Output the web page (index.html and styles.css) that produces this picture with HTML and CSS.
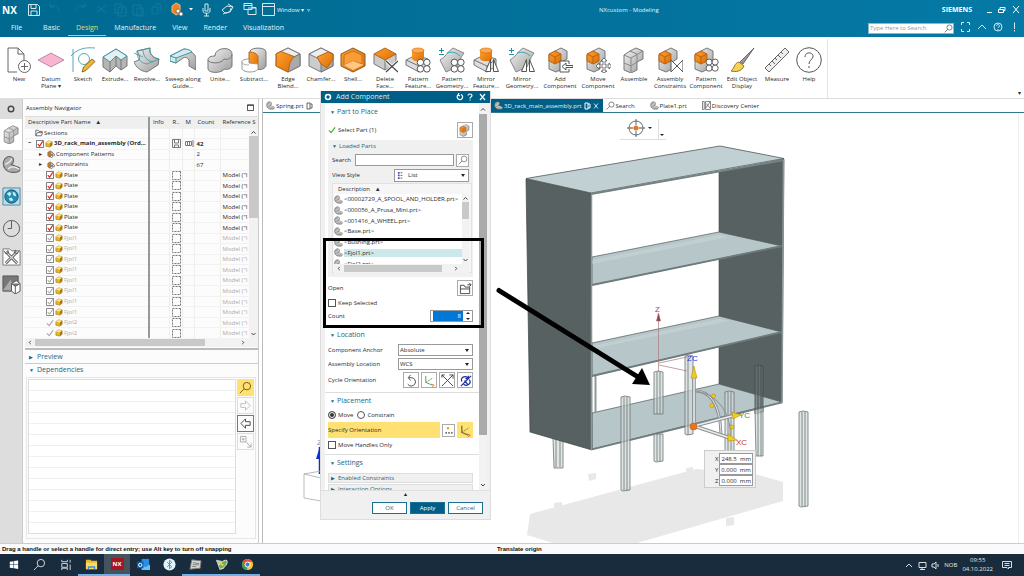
FILE: index.html
```html
<!DOCTYPE html>
<html lang="en">
<head>
<meta charset="utf-8">
<title>NXcustom - Modeling</title>
<link rel="stylesheet" href="styles.css">
</head>
<body>
<svg class="sprite" aria-hidden="true">
  <defs>
    <linearGradient id="metal" x1="0" y1="0" x2="1" y2="1"><stop offset="0" stop-color="#f4f4f4"/><stop offset="1" stop-color="#9c9c9c"/></linearGradient>
    <linearGradient id="amber" x1="0" y1="0" x2="1" y2="1"><stop offset="0" stop-color="#ffa233"/><stop offset="1" stop-color="#dd6c00"/></linearGradient>
  </defs>
  <symbol id="box" viewBox="0 0 26 26"><path d="M1 7 13 1l12 6v12l-12 6L1 19z" fill="#ccc" stroke="#777"/><path d="M1 7 13 1l12 6-12 6z" fill="#eee" stroke="#777"/><path d="M13 13 25 7v12l-12 6z" fill="#aaa" stroke="#777"/></symbol>
  <symbol id="blocks" viewBox="0 0 26 26"><path d="M9 4 15 1l7 3v8l-6 3v8l-6 3-7-3V8z" fill="url(#metal)" stroke="#777"/><path d="M3 8l7 3 12-7M10 11v15M3 16l7 3 6-4M9 4l7 3v8" fill="none" stroke="#888"/></symbol>
  <symbol id="oblocks" viewBox="0 0 26 26"><path d="M8 4 14 1l6 3v8l-5 3v7l-6 3-7-3V8z" fill="url(#metal)" stroke="#777"/><path d="M2 7l6-3 6 3v7l-6 3-6-3z" fill="url(#amber)" stroke="#b86414"/><path d="M2 7l6 3 6-3M8 10v7" fill="none" stroke="#b86414"/></symbol>
  <symbol id="check" viewBox="0 0 9 9"><path d="M.5.5h8v8h-8z" fill="#fff" stroke="#666"/><path d="M2 4.500l2 2.500 3.500-5.500" fill="none" stroke="#d22" stroke-width="1.300"/></symbol>
  <symbol id="gcheck" viewBox="0 0 9 9"><path d="M.5.5h8v8h-8z" fill="#fff" stroke="#777"/><path d="M2 4.500l2 2.500 3.500-5.500" fill="none" stroke="#888"/></symbol>
  <symbol id="tick" viewBox="0 0 9 9"><path d="M1 5l2.500 2.500L8 1.500" fill="none" stroke="currentColor" stroke-width="1.300"/></symbol>
  <symbol id="cube" viewBox="0 0 9 9"><path d="M1 3 4 1l4 1v4L5.500 8 1 7z" fill="#e9b521" stroke="#8d6b12" stroke-width=".6"/><path d="M1 3 4 1l4 1-2.500 2z" fill="#ffe88c"/><path d="M5.500 4 8 2v4L5.500 8z" fill="#a87912"/></symbol>
  <symbol id="set" viewBox="0 0 9 9"><path d="M8.500.5h-8v8h8z" fill="none" stroke="#777" stroke-dasharray="2 1"/></symbol>
  <symbol id="part" viewBox="0 0 12 12"><path d="M1 4c1-3 4-4 6-2 1 2 0 3-1 4l5 2c1 3-2 3-4 3C3 11 0 8 1 4z" fill="#aaa" stroke="#666" stroke-width=".7"/><path d="M2 6c2-1 4-2 4-4M4 9c1-2 4-2 7 0" fill="none" stroke="#eee" stroke-width=".8"/></symbol>
  <symbol id="lens" viewBox="0 0 14 14"><circle cx="8.500" cy="5.500" r="4"/><path d="M5.600 8.400 1 13"/></symbol>
  <symbol id="pattern" viewBox="0 0 12 12"><g fill="#fff" stroke="#555" stroke-width=".8"><circle cx="3.500" cy="3.500" r="2.600"/><circle cx="8.700" cy="3.500" r="2.600"/><circle cx="3.500" cy="8.700" r="2.600"/><circle cx="8.700" cy="8.700" r="2.600"/></g></symbol>
  <symbol id="mirror" viewBox="0 0 14 14"><path d="M5.500 1v12H.5zM8.500 1v12h5z" fill="#fff" stroke="#555"/></symbol>
  <symbol id="surface" viewBox="0 0 26 26"><path d="M1 13C7 10 8 5 14 1l11 5c-4 5-5 10-7 14L7 25z" fill="url(#metal)" stroke="#888"/><path d="M8 6c6-2 10 0 13 3" fill="none" stroke="#36a6b6"/><path d="M0 3.500h5M2.500 1v5M0 7.500h5" stroke="#1892a4"/></symbol>
  <symbol id="boss" viewBox="0 0 26 26"><path d="M1 13l10-5 12 4v7l-9 6-13-7z" fill="#ddd" stroke="#777"/><path d="M1 13l13 6 9-7M14 19v6" fill="none" stroke="#777"/><path d="M7 3v9c2 3 10 3 12 0V3z" fill="url(#amber)"/><ellipse cx="13" cy="3.500" rx="6" ry="2.500" fill="#ffa94a" stroke="#c46a10" stroke-width=".6"/></symbol>
  <symbol id="compIcon" viewBox="0 0 10 10"><path d="M1 3l3-2 2 2v4L3 9 1 7z" fill="#cf7a1e" stroke="#704010" stroke-width=".6"/><g fill="#fff" stroke="#444" stroke-width=".8"><circle cx="6" cy="4" r="1.500"/><circle cx="8.300" cy="6" r="1.300"/><circle cx="5.500" cy="8" r="1.400"/></g></symbol>
</svg>

<div class="app">
  <header class="top">
    <div class="titlebar">
      <strong class="nx">NX</strong>
      <svg class="quick" viewBox="0 0 284 20" fill="none" stroke="#d5e9f0">
        <path d="M1.500 4.500h9l2 2v9h-11zM4 4.500v4h5v-4M4 15v-4h6v4"/>
        <g stroke="#14789d"><path d="M23 7c4-3 8-1 9 4M23 7V3M23 7h4M58 7c-4-3-8-1-9 4M58 7V3M58 7h-4M70 12l9-7M70 6l9 7M88 4h7v9h-7zM91 7h8v9h-8zM106 5h8v10h-8zM110 8h6v8h-6zM125 7h6v7h-6zM128 4h6v8"/></g>
        <path d="M145 6l4-3 4 2v8l-4 2-4-3z" fill="#ec8421" stroke="#f7b87b"/><g fill="#fff" stroke="#555" stroke-width=".7"><circle cx="151" cy="11" r="2"/><circle cx="154" cy="14" r="2"/></g>
        <path d="M162 8h4l-2 2.500z" fill="#fff" stroke="none"/>
        <path d="M178 4h3v7h-3zM176 8v3c0 3 7 3 7 0V8M179.500 13v3M177 16h5"/>
        <path d="M195 10l5-4 6 1-3 5-5 1zM201 4l5 3M196 14c4-2 7 0 8-6"/>
        <path d="M217 3.500h8v6h-8zM217 5.500h8M221 9.500v5h8v-7h-4M221 8h8"/>
        <path d="M235.500 3.500h12v12h-12zM235.500 6.500h12"/>
      </svg>
      <span class="window-label">Window ▾ &nbsp;▿</span>
      <span class="doc-title">NXcustom - Modeling</span>
      <strong class="brand">SIEMENS</strong>
      <svg class="win-controls" viewBox="0 0 34 12" fill="none" stroke="#fff"><path d="M1 8.500h5M12.500 5.500h5v3h-5zM14 5V3.500h5v3h-1M27 2l6 7M33 2l-6 7"/></svg>
    </div>
    <div class="menubar">
      <nav class="menu">
        <a href="#" class="file">File</a><a href="#">Basic</a><a href="#" class="active">Design</a><a href="#">Manufacture</a><a href="#">View</a><a href="#">Render</a><a href="#">Visualization</a>
      </nav>
      <label class="cmd-search"><input type="text" placeholder="Type Here to Search" aria-label="Search commands"><svg viewBox="0 0 14 14" fill="none" stroke="#444"><use href="#lens"/></svg></label>
      <svg class="head-icons" viewBox="0 0 58 12" fill="none" stroke="#d5e9f0"><path d="M1.500 4V1.500H4M7 1.500h2.500V4M9.500 8v2.500H7M4 10.500H1.500V8M18 8l4-4 4 4"/><circle cx="38" cy="6" r="4"/><path d="M36.500 5c0-2 3-2 3 0 0 1-1.500 1-1.500 2M38 8v1M54.500 1.500V8M54.500 9v1.500"/></svg>
    </div>
  </header>

  <div class="ribbon">
    <button class="tool"><svg viewBox="0 0 26 26" fill="none" stroke="#666"><path d="M11 25H2V1h10l6 6v7M12 1v6h6"/><circle cx="18.500" cy="19.500" r="6"/><path d="M18.500 16v7M15 19.500h7"/></svg>New</button>
    <button class="tool"><svg viewBox="0 0 26 26"><path d="M0 13 13 6l13 7-13 7z" fill="#f9b4d2" stroke="#a06c85" stroke-width=".7"/></svg>Datum<br>Plane ▾</button>
    <button class="tool"><svg viewBox="0 0 26 26" fill="none" stroke="#2b95ab" stroke-width=".8"><path d="M1 9C7 2 15 0 25 1M3 2v23"/><circle cx="14" cy="12" r="5.500"/><path d="M12 25l1.500-5L22 12l3 2.500-9 9z" fill="#f2b530" stroke="#6f5517"/></svg>Sketch</button>
    <button class="tool"><svg viewBox="0 0 26 26"><path d="M1 10 14 2l11 7v10l-6 4-5-4-6 6-7-5z" fill="#b5b5b5" stroke="#777"/><path d="M1 10 14 2l11 7-6 4-5-4-6 6z" fill="#e4eff0" stroke="#3a98a6"/><path d="M8 15v10M14 9v10M19 13v10" stroke="#777"/></svg>Extrude...</button>
    <button class="tool"><svg viewBox="0 0 26 26"><path d="M3 4 16 1c-1 6 3 10 9 11l-1 6-11 7C6 24 2 20 0 15l5-2c1-3 0-6-2-9z" fill="url(#metal)" stroke="#777"/><path d="M3 4 16 1c-1 6 3 10 9 11l-12 5C6 16 3 11 3 4zM0 6l9 4M9 3c0 6 4 11 10 12" fill="none" stroke="#3a98a6" stroke-width=".8"/></svg>Revolve...</button>
    <button class="tool wider"><svg viewBox="0 0 26 26"><path d="M0 9 14 2c7 1 11 5 12 9v12l-7-4v-6c-2-3-4-3-6-2l-7 5-6-2z" fill="url(#metal)" stroke="#777"/><path d="M0 9v5l6 2v-5zM0 9 14 2c4 0 6 1 8 3L6 11" fill="#d4eaec" stroke="#3a98a6"/></svg>Sweep along<br>Guide...</button>
    <button class="tool mid"><svg viewBox="0 0 26 26"><path d="M1 13c0-3 3-4 7-4 0-9 17-10 17-2v12c-1 3-5 4-8 3-1 4-15 5-16 0z" fill="url(#metal)" stroke="#777"/><path d="M1 13c1 4 14 4 16-1 3 1 7 0 8-4" fill="none" stroke="#777"/></svg>Unite...</button>
    <button class="tool mid"><svg viewBox="0 0 26 26"><path d="M9 4c2-4 16-4 16 1v14c-2 4-7 4-10 3z" fill="url(#metal)" stroke="#777"/><path d="M8 5c5 0 8 2 9 4v13l-9-6z" fill="url(#amber)" stroke="#b86414"/><path d="M8 12c-4 0-7 1-7 3v7c2 4 14 4 16 0v-5l-9-1z" fill="#fff" stroke="#999"/><path d="M1 15c0 2 3 3 7 3" fill="none" stroke="#aaa"/></svg>Subtract...</button>
    <button class="tool mid"><svg viewBox="0 0 26 26"><use href="#box"/><path d="M1 7 6 4.500l13 5C17 12 14 16 14 21l-1 4-12-6c0-4 1-8 0-12z" fill="url(#amber)" stroke="#b86414"/></svg>Edge<br>Blend...</button>
    <button class="tool"><svg viewBox="0 0 26 26"><use href="#box"/><path d="M9 10 20 5l5 2v5l-6 9-6-4z" fill="url(#amber)" stroke="#b86414"/></svg>Chamfer...</button>
    <button class="tool"><svg viewBox="0 0 26 26"><path d="M1 7 13 1l12 6v12l-12 6L1 19z" fill="url(#amber)" stroke="#8a5a28"/><path d="M4 8l9 5 9-5 1 10-10 5-9-5z" fill="#f9a850"/><path d="M4 8l9-4 9 4v9l-9-3-9 4z" fill="#fb9d36" stroke="#9c5b14" stroke-width=".6"/><path d="M4 18l9-4 10 4-10 5z" fill="#ffc684"/></svg>Shell...</button>
    <button class="tool"><svg viewBox="0 0 26 26"><path d="M2 7v10l11 6 11-6V7z" fill="#ccc" stroke="#777"/><path d="M2 7 13 1l11 6-11 6z" fill="url(#amber)" stroke="#b86414"/><path d="M13 13v10" stroke="#777"/><path d="M14 14l12 11M26 14 14 25" stroke="#fff" stroke-width="3"/><path d="M14 14l12 11M26 14 14 25" stroke="#444" stroke-width="1.200"/></svg>Delete<br>Face...</button>
    <button class="tool mid"><svg viewBox="0 0 26 26"><use href="#boss"/><use href="#pattern" x="11" y="11" width="15" height="15"/></svg>Pattern<br>Feature...</button>
    <button class="tool mid"><svg viewBox="0 0 26 26"><use href="#surface"/><use href="#pattern" x="11" y="11" width="15" height="15"/></svg>Pattern<br>Geometry...</button>
    <button class="tool mid"><svg viewBox="0 0 26 26"><use href="#boss"/><use href="#mirror" x="12" y="11" width="14" height="15"/></svg>Mirror<br>Feature...</button>
    <button class="tool wide"><svg viewBox="0 0 26 26"><use href="#surface"/><use href="#mirror" x="12" y="11" width="14" height="15"/></svg>Mirror<br>Geometry...</button>
    <button class="tool wide"><svg viewBox="0 0 26 26"><use href="#oblocks"/><path d="M22 17v-3h-9v11h9v-3M26 18.500h-7V16l-4 3.500 4 3.500v-2.500h7z" fill="#fff" stroke="#555"/></svg>Add<br>Component</button>
    <button class="tool wide"><svg viewBox="0 0 26 26"><use href="#oblocks"/><path d="M19 11l3 3h-2v4h4v-2l2.500 3-2.500 3v-2h-4v4h2l-3 2-3-2h2v-4h-4v2l-3-3 3-3v2h4v-4h-2z" fill="#fff" stroke="#555" stroke-width=".8"/></svg>Move<br>Component</button>
    <button class="tool mid"><svg viewBox="0 0 26 26"><use href="#blocks"/></svg>Assemble</button>
    <button class="tool wide"><svg viewBox="0 0 26 26"><use href="#oblocks"/><path d="M14 13v12l12-12v12z" fill="#fff" stroke="#555"/></svg>Assembly<br>Constraints</button>
    <button class="tool mid"><svg viewBox="0 0 26 26"><use href="#oblocks"/><use href="#pattern" x="12" y="11" width="14" height="14"/></svg>Pattern<br>Component</button>
    <button class="tool wide"><svg viewBox="0 0 26 26"><path d="M25 1 14 17l-3-2z" fill="#999" stroke="#555" stroke-width=".8"/><path d="M10 15l5 4c-3 6-8 6-13 5 4-3 3-8 8-9z" fill="#f7d257" stroke="#8f7424"/></svg>Edit Object<br>Display</button>
    <button class="tool"><svg viewBox="0 0 26 26"><path d="M1 21 21 1l4 4L5 25z" fill="#eee" stroke="#666"/><path d="M5 17l2 2M8 14l3 3M11 11l2 2M14 8l3 3M17 5l2 2" stroke="#666"/></svg>Measure</button>
    <button class="tool"><svg viewBox="0 0 26 26" fill="none" stroke="#555"><circle cx="13" cy="13" r="12.300"/><path d="M9 10c0-6 9-5 8 0-1 3-4 3-4 7M13 19v2"/></svg>Help</button>
    <span class="ribbon-end">▾</span>
  </div>

  <div class="main">
    <aside class="rail">
      <button aria-label="Settings"><svg viewBox="0 0 20 20" fill="none" stroke="#444" stroke-width="2"><circle cx="10" cy="10" r="4"/></svg></button>
      <button class="on" aria-label="Assembly Navigator"><svg viewBox="0 0 26 26"><use href="#blocks"/></svg></button>
      <button aria-label="Part Navigator"><svg viewBox="0 0 12 12"><use href="#part"/></svg></button>
      <button class="web" aria-label="Web Browser"><svg viewBox="0 0 20 20"><path d="M1 1h18v18H1z" fill="#bcdceb" stroke="#4e8aa8"/><circle cx="10" cy="10" r="7" fill="#248bb5" stroke="#17586f"/><path d="M5 7l3-2 2 2-2 3zM11 5l3 1 1 4-3-1zM7 12l3-1 2 3-3 1z" fill="#c9eef2"/></svg></button>
      <button aria-label="History"><svg viewBox="0 0 20 20" fill="none" stroke="#555"><circle cx="10" cy="10" r="8.500"/><path d="M10 2v8H6"/></svg></button>
      <button aria-label="Process Studio"><svg viewBox="0 0 20 20"><path d="M1 2h7l2 2h9v15H1z" fill="#fff" stroke="#777"/><path d="M4 5l12 12M16 5 4 17" stroke="#555" stroke-width="3"/><path d="M4 5l12 12M16 5 4 17" stroke="#ddd" stroke-width="1.300"/><path d="M2 4l2 3 3-1-1-3M18 4l-2 3-3-1 1-3" fill="none" stroke="#555"/></svg></button>
      <button aria-label="System Scenes"><svg viewBox="0 0 20 20"><path d="M1 1h16v16H1z" fill="#777" stroke="#555"/><path d="M1 16 9 5l5 11z" fill="#aaa"/><path d="M10 9l5-3 4 3v8l-5 3-4-3zM10 9l4 3 5-3M14 12v8" fill="#fff" stroke="#555"/></svg></button>
    </aside>

    <section class="navigator">
      <div class="panel-title"><span>Assembly Navigator</span><svg viewBox="0 0 8 8" fill="none" stroke="#333"><path d="M.5 1h7v6.500h-7zM.5 1.500h7"/></svg></div>
      <div class="tree">
        <table>
          <colgroup><col class="c-name"><col class="c-info"><col class="c-r"><col class="c-m"><col class="c-count"><col></colgroup>
          <thead><tr><th>Descriptive Part Name &nbsp; ▲</th><th>Info</th><th>R..</th><th>M</th><th>Count</th><th>Reference S</th></tr></thead>
          <tbody>
            <tr><td><span class="cell l1"><svg viewBox="0 0 10 9" fill="none" stroke="#555"><path d="M1 8V1h3l1 1.500h4V4M1 8l2-4h6.500L8 8z"/></svg>Sections</span></td><td></td><td></td><td></td><td></td><td></td></tr>
            <tr class="root"><td><span class="cell l0"><i>−</i><svg><use href="#check"/></svg><svg><use href="#cube"/></svg>3D_rack_main_assembly (Ord...</span></td><td></td><td><svg viewBox="0 0 9 9" fill="none" stroke="#777"><path d="M.5.5h8v8h-8zM2.500 1v3h4V1M2.500 8V6h4v2"/></svg></td><td><svg viewBox="0 0 9 9" fill="none" stroke="#777"><path d="M.5 2.500h6v4h-6zM2.500 3v3M4.500 3v3M8 1v7"/></svg></td><td>42</td><td></td></tr>
            <tr><td><span class="cell l2"><i>▸</i><svg><use href="#compIcon"/></svg>Component Patterns</span></td><td></td><td></td><td></td><td>2</td><td></td></tr>
            <tr><td><span class="cell l2"><i>▸</i><svg><use href="#compIcon"/></svg>Constraints</span></td><td></td><td></td><td></td><td>67</td><td></td></tr>
            <tr><td><span class="cell l3"><svg><use href="#check"/></svg><svg><use href="#cube"/></svg>Plate</span></td><td></td><td><svg><use href="#set"/></svg></td><td></td><td></td><td>Model ("I</td></tr>
            <tr><td><span class="cell l3"><svg><use href="#check"/></svg><svg><use href="#cube"/></svg>Plate</span></td><td></td><td><svg><use href="#set"/></svg></td><td></td><td></td><td>Model ("I</td></tr>
            <tr><td><span class="cell l3"><svg><use href="#check"/></svg><svg><use href="#cube"/></svg>Plate</span></td><td></td><td><svg><use href="#set"/></svg></td><td></td><td></td><td>Model ("I</td></tr>
            <tr><td><span class="cell l3"><svg><use href="#check"/></svg><svg><use href="#cube"/></svg>Plate</span></td><td></td><td><svg><use href="#set"/></svg></td><td></td><td></td><td>Model ("I</td></tr>
            <tr><td><span class="cell l3"><svg><use href="#check"/></svg><svg><use href="#cube"/></svg>Plate</span></td><td></td><td><svg><use href="#set"/></svg></td><td></td><td></td><td>Model ("I</td></tr>
            <tr><td><span class="cell l3"><svg><use href="#check"/></svg><svg><use href="#cube"/></svg>Plate</span></td><td></td><td><svg><use href="#set"/></svg></td><td></td><td></td><td>Model ("I</td></tr>
            <tr class="dim"><td><span class="cell l3"><svg><use href="#gcheck"/></svg><svg><use href="#cube"/></svg>Fjol1</span></td><td></td><td><svg><use href="#set"/></svg></td><td></td><td></td><td>Model ("I</td></tr>
            <tr class="dim"><td><span class="cell l3"><svg><use href="#gcheck"/></svg><svg><use href="#cube"/></svg>Fjol1</span></td><td></td><td><svg><use href="#set"/></svg></td><td></td><td></td><td>Model ("I</td></tr>
            <tr class="dim"><td><span class="cell l3"><svg><use href="#gcheck"/></svg><svg><use href="#cube"/></svg>Fjol1</span></td><td></td><td><svg><use href="#set"/></svg></td><td></td><td></td><td>Model ("I</td></tr>
            <tr class="dim"><td><span class="cell l3"><svg><use href="#gcheck"/></svg><svg><use href="#cube"/></svg>Fjol1</span></td><td></td><td><svg><use href="#set"/></svg></td><td></td><td></td><td>Model ("I</td></tr>
            <tr class="dim"><td><span class="cell l3"><svg><use href="#gcheck"/></svg><svg><use href="#cube"/></svg>Fjol1</span></td><td></td><td><svg><use href="#set"/></svg></td><td></td><td></td><td>Model ("I</td></tr>
            <tr class="dim"><td><span class="cell l3"><svg><use href="#gcheck"/></svg><svg><use href="#cube"/></svg>Fjol1</span></td><td></td><td><svg><use href="#set"/></svg></td><td></td><td></td><td>Model ("I</td></tr>
            <tr class="dim"><td><span class="cell l3"><svg><use href="#gcheck"/></svg><svg><use href="#cube"/></svg>Fjol1</span></td><td></td><td><svg><use href="#set"/></svg></td><td></td><td></td><td>Model ("I</td></tr>
            <tr class="dim"><td><span class="cell l3"><svg><use href="#gcheck"/></svg><svg><use href="#cube"/></svg>Fjol1</span></td><td></td><td><svg><use href="#set"/></svg></td><td></td><td></td><td>Model ("I</td></tr>
            <tr class="dim"><td><span class="cell l3"><svg><use href="#tick"/></svg><svg><use href="#cube"/></svg>Fjol2</span></td><td></td><td><svg><use href="#set"/></svg></td><td></td><td></td><td>Model ("I</td></tr>
            <tr class="dim"><td><span class="cell l3"><svg><use href="#tick"/></svg><svg><use href="#cube"/></svg>Fjol2</span></td><td></td><td><svg><use href="#set"/></svg></td><td></td><td></td><td>Model ("I</td></tr>
          </tbody>
        </table>
        <div class="vscroll"><svg viewBox="0 0 6 4"><path d="M1 3.500l2-2 2 2"/></svg><b></b><svg viewBox="0 0 6 4"><path d="M1 1l2 2 2-2"/></svg></div>
      </div>
      <div class="hscroll"><svg viewBox="0 0 4 6"><path d="M3 1 1 3l2 2"/></svg><b></b><svg viewBox="0 0 4 6"><path d="M1 1l2 2-2 2"/></svg></div>
      <h2 class="fold"><i>▶</i>Preview</h2>
      <h2 class="fold"><i>▼</i>Dependencies</h2>
      <div class="deps">
        <div class="dep-list"></div>
        <div class="dep-tools">
          <button class="gold" aria-label="Detailed view"><svg viewBox="0 0 14 14" fill="none" stroke="#6a5718"><use href="#lens"/></svg></button>
          <button aria-label="Next"><svg viewBox="0 0 14 14" fill="none" stroke="#bbb"><path d="M2 5h5V2l5 5-5 5V9H2z"/></svg></button>
          <button class="strong" aria-label="Previous"><svg viewBox="0 0 14 14" fill="none" stroke="#444"><path d="M12 5H7V2L2 7l5 5V9h5z"/></svg></button>
          <button aria-label="Expand"><svg viewBox="0 0 14 14" fill="none" stroke="#aaa"><path d="M1.500 1.500h6v6h-6zM4.500 3v3M3 4.500h3M8 8l5 5M13 9v4H9"/></svg></button>
        </div>
      </div>
    </section>

    <section class="work">
      <div class="doc-tabs">
        <div class="tabs-left"><button class="tab"><svg viewBox="0 0 12 12"><use href="#part"/></svg>Spring.prt<svg class="tiny" viewBox="0 0 8 8" fill="none" stroke="#666"><path d="M2 1h3v6H2zM5 2h2v4H5"/></svg></button></div>
        <div class="tabs-right">
          <button class="tab current"><svg viewBox="0 0 12 12"><use href="#part"/></svg>3D_rack_main_assembly.prt<svg class="tiny" viewBox="0 0 8 8" fill="none" stroke="#fff"><path d="M2 1h3v6H2zM5 2h2v4H5"/></svg><svg class="tiny" viewBox="0 0 8 8" stroke="#cde"><path d="M2 1.500l4 5M6 1.500l-4 5"/></svg></button>
          <button class="tab"><svg viewBox="0 0 14 14" fill="none" stroke="#444"><use href="#lens"/></svg>Search</button>
          <button class="tab gap"><svg viewBox="0 0 12 12"><use href="#part"/></svg>Plate1.prt</button>
          <button class="tab gap"><svg viewBox="0 0 10 10" fill="none" stroke="#777"><path d="M.5.5h2v9h-2zM4 .5h5.500v9H4zM4 8l5-7M5 3l4 5"/></svg>Discovery Center</button>
        </div>
      </div>
      <div class="viewport">
        <svg class="scene">
          <g transform="translate(-263 -113)">
            <path d="M1018.500 114v429" stroke="#eee"/>
            <g fill="none" stroke="#5a6870"><circle cx="636" cy="128" r="7"/><path d="M636 119v6M636 131v6M627 128h6M639 128h6"/></g>
            <circle cx="636" cy="128" r="2.500" fill="#e87722"/><path d="M630 128h12" stroke="#e87722" stroke-dasharray="2 1"/>
            <path d="M648 127h4l-2 2zM660 134h4l-2 2z" fill="#222"/><path d="M658.500 119v20M620 139.500h46" stroke="#ddd"/>
            <g fill="#e8e8e8"><path d="M530 514 696 469l59 5 28 8v19l-146 42h-84l-26-8z"/><path d="M588 474l8-1v6l-7 2zM686 468l7-1v4l-7 1zM554 503l8-1v7l-8 1zM726 518l8-1v8l-8 1z"/></g>
            <g class="leg"><path d="M553 438h10v30h-9zM556 438v29M560 438v29"/></g>
            <path d="M719 172l65-13-2 244-63-19z" fill="#586161" stroke="#444c4c" stroke-width=".6"/>
            <g fill="#b7c6c8" stroke="#4f5959" stroke-width=".7">
              <path d="M592 413l127-29 63 18-190 47z"/><path d="M592 343l127-27 63 16-190 44z"/><path d="M592 257l127-25 63 14-190 39z"/>
            </g>
            <path d="M592 346l127-27 10 2-137 28zM592 260l127-25 10 2-137 27z" fill="#cad6d8" opacity=".6"/>
            <path d="M592 449.500l190-47M592 376l190-44M592 285l190-39" stroke="#6e7c7e" stroke-width="1.800"/>
            <path d="M526 179l65 14 1 257-62-18z" fill="#586161" stroke="#3d4545" stroke-width=".7"/>
            <path d="M526 178.500 720 146l64 12.500L591 193z" fill="#c1d0d2" stroke="#4f5959" stroke-width=".8"/>
            <path d="M591 194l193-34" stroke="#748284" stroke-width="2"/><path d="M591.500 194v256M783.500 160l-1.500 243" stroke="#89999b" stroke-width="1.500"/>
            <path d="M595.500 376v36" stroke="#8a9999" stroke-width="2"/>
            <g class="leg">
              <path d="M621 397l4-1 5 1v93l-7 1-2-1zM624 397v93M627 397v93"/>
              <path d="M654 372l4-1 5 1v42h-9zM657 372v42M660 372v42M654 434h9v27l-7 1-2-1zM657 434v27M660 434v27"/>
              <path d="M685 356l4-1 4 1v78l-6 1-2-1zM688 356v79"/>
              <path d="M725 392l4-1 5 1v60h-9zM728 392v60M731 392v60"/>
              <path d="M799 412l4-1 5 1v94l-7 1-2-1zM802 412v94M805 412v94"/>
            </g>
            <g class="leg dark"><path d="M755 366l4-1 4 1v46l-8 2zM758 366v46M761 366v46"/></g>
            <g class="leg"><path d="M755 410l8-2v48h-7zM758 410v46M761 410v46"/></g>
            <g stroke="#a77a7a" stroke-width=".7"><path d="M658.500 318v54M659 365l28 6M659 363l28-6" fill="none"/><path d="M658.500 313l2 8h-4z" fill="#8d3b3b"/></g>
            <g fill="none" stroke="#8a8f92"><path d="M694 391c15-1 26 12 27 43" stroke-width="3"/><path d="M694 391c15-1 26 12 27 43" stroke="#e8ebec"/><path d="M694 391c20 1 38 20 36 45"/><path d="M694 426V378M694 426l38-10M694 426l36 12" stroke-width="3.500"/><path d="M694 426V378M694 426l38-10M694 426l36 12" stroke="#ecefef" stroke-width="1.500"/></g>
            <g fill="#f5cb16" stroke="#a48513" stroke-width=".5"><path d="M694 366l3 12h-6zM741 415l-9-3 1 7zM737 440l-9-6v7z"/><circle cx="713.500" cy="396" r="2"/><circle cx="712" cy="405.500" r="2"/><circle cx="732" cy="427" r="2"/></g>
            <circle cx="693.500" cy="426.500" r="3.500" fill="#f07516" stroke="#a84e08" stroke-width=".5"/>
            <g class="axis"><text x="655" y="312" fill="#a05050">Z</text><text x="687" y="361" fill="#2a39e0">ZC</text><text x="739" y="418" fill="#3b8d43">YC</text><text x="736" y="445" fill="#c03b32">XC</text><text x="317" y="445" fill="#7b86c0">Z</text></g>
            <path d="M320 447v27" stroke="#0b2fd0" stroke-width="2.500"/><path d="M320 446l-4 13h4z" fill="#0b2fd0"/>
            <path d="M304 474l17-3M304 474v24l17 3M304 474l17 4" fill="none" stroke="#aaa" stroke-width=".8"/>
            <path d="M499 290.500 638 377" stroke="#000" stroke-width="5" stroke-linecap="round"/><path d="M650 385l-18-1 10-16z"/>
          </g>
        </svg>
        <form class="coords">
          <label>X<input type="text" value="248.5  mm"></label>
          <label>Y<input type="text" value="0.000  mm"></label>
          <label>Z<input type="text" value="0.000  mm"></label>
        </form>
      </div>
    </section>
  </div>

  <footer class="status"><span>Drag a handle or select a handle for direct entry; use Alt key to turn off snapping</span><span>Translate origin</span></footer>

  <div class="taskbar">
    <button aria-label="Start"><svg viewBox="0 0 14 14" fill="#fff"><path d="M3 4l4-.6V7H3zM7.600 3.300 12 2.700V7H7.600zM3 7.600h4V11l-4-.6zM7.600 7.600H12v4.200l-4.400-.7z"/></svg></button>
    <button aria-label="Search"><svg viewBox="0 0 14 14" fill="none" stroke="#ddd"><use href="#lens"/></svg></button>
    <button aria-label="Task view"><svg viewBox="0 0 14 14" fill="none" stroke="#ddd"><path d="M3 2v2h6V2M3 6h6v4H3zM3 13v-2h6v2M12 2v3M12 7v6"/></svg></button>
    <button class="open" aria-label="File Explorer"><svg viewBox="0 0 14 14"><path d="M1 2h5l1 1h6v9H1z" fill="#e9b62f"/><path d="M1 5h12v7H1z" fill="#ffd868"/><path d="M3 12V9h8v3H9.500v-1.500h-5V12z" fill="#3a8fd8"/></svg></button>
    <button class="open front" aria-label="NX"><span class="nx-tile">NX</span></button>
    <button aria-label="Outlook"><svg viewBox="0 0 14 14"><path d="M5 1h8v11H5z" fill="#2a8fe0"/><path d="M5 7l4 3 5-3v6H5z" fill="#66c0f4"/><path d="M0 4h7v7H0z" fill="#0d5fb0"/><circle cx="3.500" cy="7.500" r="1.800" fill="none" stroke="#fff"/></svg></button>
    <button aria-label="Bluetooth"><svg viewBox="0 0 14 14"><circle cx="7" cy="7" r="6.500" fill="#e3f5fa"/><path d="M4.500 4.500l5 5L7 11.500v-9l2.500 2-5 5" fill="none" stroke="#3696ba"/></svg></button>
    <button class="open" aria-label="Notes"><svg viewBox="0 0 14 14"><path d="M3 2l10 1-1 8-11 1z" fill="#d5d9db" stroke="#777"/><path d="M4 5l7 1M4 7l7 .5M3 9l5 .5" stroke="#777"/></svg></button>
    <button class="open" aria-label="Paint"><svg viewBox="0 0 14 14"><path d="M1 2l6 1 3 8-5 2z" fill="#9fd6f0"/><path d="M4 8c2-4 8-7 9-5s-2 8-7 9" fill="#6fb14b" stroke="#eee"/><path d="M2 3l7 5" stroke="#f2c94c" stroke-width="2"/></svg></button>
    <button class="open" aria-label="Chrome"><svg viewBox="0 0 14 14"><circle cx="7" cy="7" r="6" fill="#f5c634"/><path d="M1.800 4a6 6 0 0 1 10.400 0H7L4.400 8.500z" fill="#df4a3a"/><path d="M1.800 4 4.500 8.500 7 10l-.5 3A6 6 0 0 1 1.800 4z" fill="#34a04f"/><circle cx="7" cy="7" r="2.700" fill="#3c7ee6" stroke="#fff"/></svg></button>
    <div class="tray">
      <svg viewBox="0 0 34 12" fill="none" stroke="#ddd"><path d="M1 8l3-3 3 3M14 3.500h7v5h-7zM17 8.500V11M15 10.500h5M27 5v3h2l2 2V3l-2 2zM33 5v3"/></svg>
      <span>NOB</span>
      <span class="clock">09:55<br>04.10.2022</span>
      <svg class="note" viewBox="0 0 10 10" fill="none" stroke="#ddd"><path d="M.5 1.500h9v6h-3V9L5 7.500H.5zM2.500 3.500h5M2.500 5.500h5"/></svg>
    </div>
  </div>

  <div class="dialog" role="dialog" aria-label="Add Component">
    <div class="dlg-title"><svg viewBox="0 0 8 8" fill="none" stroke="#fff" stroke-width="1.500"><circle cx="4" cy="4" r="2.500"/></svg><span>Add Component</span><svg class="dlg-btns" viewBox="0 0 30 8" fill="none" stroke="#fff" stroke-width="1.200"><path d="M2 2a2.700 2.700 0 1 0 3-.5M3 0l-1 2 2 1M12 2.500C12 .5 16 .5 16 2.500 16 4 14 4 14 5.500M14 6.500v1M24 1l5 6M29 1l-5 6"/></svg></div>
    <div class="dlg-body">
      <div class="dlg-content">
        <section>
          <h3><i>▼</i>Part to Place</h3>
          <div class="row r20"><svg class="ok" viewBox="0 0 9 9"><use href="#tick"/></svg><span>Select Part (1)</span><button class="sq end" aria-label="Select part"><svg viewBox="0 0 26 26"><use href="#oblocks"/></svg></button></div>
          <div class="group">
            <h4><i>▼</i>Loaded Parts</h4>
            <div class="row r16"><label for="find">Search</label><input id="find" class="find" type="text"><button class="sq small" aria-label="Search"><svg viewBox="0 0 14 14" fill="none" stroke="#666"><use href="#lens"/></svg></button></div>
            <div class="row r14"><label for="vs">View Style</label><div class="pick"><svg viewBox="0 0 9 9"><path d="M1 1h2v2H1zM1 4h2v2H1zM1 7h2v2H1z" fill="#4a53b8"/><path d="M4 2h2M4 5h2M4 8h2" stroke="#555"/></svg><select id="vs"><option>List</option></select></div></div>
            <div class="list">
              <div class="list-head">Description &nbsp; ▲</div>
              <div class="list-mid">
                <div class="list-clip"><ul>
                  <li><svg><use href="#part"/></svg><span>&lt;00002729_A_SPOOL_AND_HOLDER.prt&gt;</span></li>
                  <li><svg><use href="#part"/></svg><span>&lt;000056_A_Prusa_Mini.prt&gt;</span></li>
                  <li><svg><use href="#part"/></svg><span>&lt;001416_A_WHEEL.prt&gt;</span></li>
                  <li><svg><use href="#part"/></svg><span>&lt;Base.prt&gt;</span></li>
                  <li><svg><use href="#part"/></svg><span>&lt;Bushing.prt&gt;</span></li>
                  <li class="sel"><svg><use href="#part"/></svg><span>&lt;Fjol1.prt&gt;</span></li>
                  <li><svg><use href="#part"/></svg><span>&lt;Fjol2.prt&gt;</span></li>
                </ul></div>
                <div class="vscroll short"><svg viewBox="0 0 6 4"><path d="M1 3.500l2-2 2 2"/></svg><b></b><svg viewBox="0 0 6 4"><path d="M1 1l2 2 2-2"/></svg></div>
              </div>
              <div class="hscroll short"><svg viewBox="0 0 4 6"><path d="M3 1 1 3l2 2"/></svg><b></b><svg viewBox="0 0 4 6"><path d="M1 1l2 2-2 2"/></svg></div>
            </div>
          </div>
          <div class="row r18"><span>Open</span><button class="sq end" aria-label="Open"><svg viewBox="0 0 14 14" fill="none" stroke="#444"><path d="M1.500 12.500v-9h4l1 2h5v7zM1.500 7.500h10M9 3h4M11 1l2 2-2 2"/></svg></button></div>
          <div class="row r12"><label><input type="checkbox">Keep Selected</label></div>
          <div class="row r14"><label for="count">Count</label><div class="spin end"><input id="count" type="text" value="8"><svg viewBox="0 0 6 10" fill="#222"><path d="M1 3l2-2 2 2zM1 7l2 2 2-2z"/></svg></div></div>
        </section>
        <section>
          <h3><i>▼</i>Location</h3>
          <div class="row r14"><label for="ca">Component Anchor</label><select id="ca" class="end"><option>Absolute</option></select></div>
          <div class="row r14"><label for="al">Assembly Location</label><select id="al" class="end"><option>WCS</option></select></div>
          <div class="row r18"><span>Cycle Orientation</span><div class="btns end">
            <button class="sq" aria-label="Reset"><svg viewBox="0 0 14 14" fill="none" stroke="#444"><path d="M4 4h3a4.500 4.500 0 1 1-4 7M6 1 3.500 4 6 7"/></svg></button>
            <button class="sq" aria-label="WCS"><svg viewBox="0 0 14 14" fill="none"><path d="M3 2v7l7 3" stroke="#4b9b58"/><path d="M3 9l8-5" stroke="#4b9b58" stroke-dasharray="2 1"/><path d="M9 11l3 1-2 2" stroke="#d17a2c"/></svg></button>
            <button class="sq" aria-label="Flip"><svg viewBox="0 0 14 14" fill="none" stroke="#444"><path d="M1 13 13 1M1 1l12 12M9 1h4v4M1 4V1h3"/></svg></button>
            <button class="sq" aria-label="Rotate"><svg viewBox="0 0 14 14" fill="none" stroke="#1f2f9c" stroke-width="1.300"><path d="M2 13 13 2M3 8c-2-5 5-7 7-3M11 6c3 4-2 8-6 5M6 7l4 5M10 2v3H7"/></svg></button>
          </div></div>
        </section>
        <section>
          <h3><i>▼</i>Placement</h3>
          <div class="row r12"><label><input type="radio" name="pm" checked>Move</label><label><input type="radio" name="pm">Constrain</label></div>
          <div class="row r18"><span class="hot">Specify Orientation</span><div class="btns end"><button class="sq small" aria-label="Point dialog"><svg viewBox="0 0 14 14"><path d="M4 3h3v3H4z" fill="#d9a62a"/><path d="M2 11h2M6 11h2M10 11h2" stroke="#222" stroke-width="2"/></svg></button><button class="sq gold" aria-label="Manipulator"><svg viewBox="0 0 14 14" fill="none"><path d="M3 2v7l7 3" stroke="#7b7a35" stroke-width="1.500"/><path d="M3 9l8-5" stroke="#7b7a35" stroke-dasharray="2 1"/><path d="M9 11l3 1-2 2" stroke="#d1602c"/></svg></button></div></div>
          <div class="row r12"><label><input type="checkbox">Move Handles Only</label></div>
        </section>
        <section class="last">
          <h3><i>▼</i>Settings</h3>
          <h4 class="bar"><i>▶</i>Enabled Constraints</h4>
          <h4 class="bar"><i>▶</i>Interaction Options</h4>
        </section>
      </div>
      <div class="vscroll tall"><svg viewBox="0 0 6 4"><path d="M1 3.500l2-2 2 2"/></svg><b></b><svg viewBox="0 0 6 4"><path d="M1 1l2 2 2-2"/></svg></div>
    </div>
    <div class="dlg-foot"><div class="collapse">▲</div><div class="actions"><button>OK</button><button class="primary">Apply</button><button>Cancel</button></div></div>
    <div class="marker"></div>
  </div>
</div>
</body>
</html>
```
FILE: styles.css
```css
* { box-sizing: border-box; }
html, body { height: 100%; }
body { margin: 0; font: 6px/8px "Open Sans", "Noto Sans", sans-serif; color: #2a2a2a; background: #fff; }
button, input, select { font: inherit; color: inherit; margin: 0; }
button { background: none; border: 0; padding: 0; display: flex; align-items: center; justify-content: center; }
a { color: inherit; text-decoration: none; }
i { font-style: normal; }
svg { display: block; flex: none; }
h2, h3, h4, ul { margin: 0; padding: 0; font-weight: 400; list-style: none; }
.sprite { position: absolute; width: 0; height: 0; }

.app { position: relative; height: 100vh; display: flex; flex-direction: column; overflow: hidden; }

/* Header */
.top { flex: none; background: linear-gradient(90deg, #006990, #0579a5); color: #e6f2f6; }
.titlebar { display: flex; align-items: center; height: 19px; padding: 0 4px 0 2px; position: relative; }
.nx { width: 25px; font-size: 10px; color: #fff; }
.quick { flex: 0 0 284px; height: 20px; margin-right: -34px; }
.window-label { white-space: nowrap; }
.doc-title { position: absolute; left: 599px; }
.brand { margin-left: auto; font-size: 7px; color: #fff; }
.win-controls { width: 34px; height: 12px; margin-left: 14px; }
.menubar { display: flex; align-items: stretch; height: 18px; padding: 0 6px 0 3px; }
.menu { display: flex; font-size: 7px; line-height: 17px; height: 17px; margin-right: auto; }
.menu a { padding: 0 8px; border-bottom: 1px solid transparent; }
.menu .file { margin-right: 5px; }
.menu .active { color: #e8d66a; border-color: #d9c95c; }
.cmd-search { display: flex; align-items: center; align-self: center; width: 86px; height: 11px; background: #fff; border: 1px solid #8bb; }
.cmd-search input { flex: 1; min-width: 0; border: 0; padding: 0 1px; background: none; }
.cmd-search input::placeholder { color: #999; }
.cmd-search svg { width: 9px; height: 9px; }
.head-icons { width: 58px; height: 12px; margin: 2px 0 0 6px; }

/* Ribbon */
.ribbon { flex: none; display: flex; height: 62px; padding: 10px 0 0 3px; background: #fff; border-bottom: 1px solid #ddd; }
.tool { flex: 0 0 32px; flex-direction: column; justify-content: flex-start; line-height: 7px; text-align: center; white-space: nowrap; }
.tool.mid { flex-basis: 34px; }
.tool.wide { flex-basis: 38px; }
.tool.wider { flex-basis: 40px; }
.tool svg { width: 26px; height: 26px; margin-bottom: 3px; }
.ribbon-end { flex: 1; align-self: stretch; margin: -8px 0 0 2px; border-left: 1px solid #e3e3e3; text-align: right; padding: 50px 3px 0 0; }

/* Main */
.main { flex: 1; min-height: 0; display: flex; }
.rail { flex: 0 0 23px; display: flex; flex-direction: column; background: #ddd; border-right: 1px solid #ccc; }
.rail button { height: 28px; }
.rail button:first-child { height: 20px; }
.rail button.on { height: 31px; background: #fff; }
.rail button.web { height: 36px; }
.rail svg { width: 19px; height: 19px; }
.rail button:first-child svg { width: 14px; height: 14px; }
.navigator { flex: 0 0 236px; display: flex; flex-direction: column; padding-left: 2px; border-right: 1px solid #ccc; background: #fcfcfc; }
.panel-title { display: flex; justify-content: space-between; align-items: center; height: 17px; padding: 0 4px 0 1px; }
.panel-title svg { width: 7px; height: 7px; }
.tree { position: relative; flex: none; height: 222px; overflow: hidden; border-top: 1px solid #ddd; }
.tree table { width: 100%; height: 222px; table-layout: fixed; border-collapse: collapse; }
.tree th, .tree td { padding: 0; font-weight: 400; text-align: left; white-space: nowrap; border-bottom: 1px solid #f2f2f2; border-right: 1px solid #eee; }
.tree th { height: 11px; background: #efefef; padding-left: 3px; }
.tree th:last-child { padding-left: 2px; border-right: 0; }
.tree td + td { padding-left: 2px; }
.tree th:first-child, .tree td:first-child { border-right: 2px solid #999; }
.tree td > svg { width: 9px; height: 9px; }
.tree .root td { font-weight: 700; }
.c-name { width: 124px; }
.c-info { width: 20px; }
.c-r { width: 13px; }
.c-m { width: 12px; }
.c-count { width: 26px; }
.cell { display: flex; align-items: center; gap: 1px; height: 9px; line-height: 9px; }
.cell svg { width: 8px; height: 8px; }
.cell i { width: 7px; }
.l0 { padding-left: 3px; }
.l1 { padding-left: 10px; }
.l2 { padding-left: 14px; }
.l3 { padding-left: 21px; }
.dim { color: #aaa; }

/* Scroll bars */
.vscroll { display: flex; flex-direction: column; align-items: stretch; background: #f2f2f2; fill: none; stroke: #444; }
.vscroll svg { height: 8px; padding: 2px 0; width: 100%; }
.vscroll b { background: #c9c9c9; }
.vscroll svg:last-child { margin-top: auto; }
.tree .vscroll { position: absolute; top: 11px; right: 0; bottom: 0; width: 9px; }
.tree .vscroll b { height: 82px; }
.hscroll { flex: none; display: flex; align-items: stretch; height: 9px; background: #f2f2f2; fill: none; stroke: #333; padding: 1px 0; }
.hscroll svg { width: 10px; height: 7px; padding: 1px 3px; }
.hscroll b { flex: 0 0 73%; background: #c9c9c9; }
.hscroll svg:last-child { margin: 0 10px 0 auto; }

.fold { flex: none; display: flex; align-items: center; height: 13px; border-top: 1px solid #ccc; font-size: 7px; color: #1d6680; }
.hscroll + .fold { height: 15px; margin-top: 1px; border-top: 2px solid #bbb; }
.fold i, h3 i, h4 i { width: 9px; font-size: 5px; padding-left: 2px; }
.fold i { width: 12px; padding-left: 4px; }
.deps { flex: 1; display: flex; gap: 1px; margin: 1px 2px 4px 1px; padding: 1px 1px 4px 1px; border: 1px solid #e6e6e6; }
.dep-list { flex: 1; border: 1px solid #ddd; background: repeating-linear-gradient(#fff 0 10px, #f0f0f0 10px 11px); }
.dep-tools { flex: none; display: flex; flex-direction: column; gap: 1px; }
.dep-tools button { width: 17px; height: 17px; border: 1px solid #ddd; }
.dep-tools svg { width: 13px; height: 13px; }
.dep-tools .strong { border-color: #777; }
.gold { background: #ffe072; }

/* Documents and canvas */
.work { flex: 1; min-width: 0; display: flex; flex-direction: column; margin-left: 3px; border-left: 1px solid #bbb; }
.doc-tabs { flex: none; display: grid; grid-template-columns: 228px 1fr; height: 14px; border-bottom: 1px solid #31788f; }
.tabs-left, .tabs-right { display: flex; }
.tab { gap: 1px; padding: 0 3px; white-space: nowrap; }
.tab svg { width: 9px; height: 9px; }
.tab .tiny { width: 8px; height: 8px; }
.tab.current { background: #005f87; color: #e5f2f7; }
.tab.gap { margin-left: 9px; }
.viewport { position: relative; flex: 1; min-height: 0; overflow: hidden; background: #fff; }
.scene { position: absolute; inset: 0; width: 100%; height: 100%; }
.leg path { fill: #d3dada; fill-opacity: .7; stroke: #6b7575; stroke-width: .8; }
.leg.dark path { fill: #6b7575; stroke: #3f4747; }
.axis { font: 8px "Liberation Sans", sans-serif; }
.coords { position: absolute; left: 441px; top: 337px; width: 52px; padding: 2px 2px 1px 10px; border: 1px solid #ccc; background: #f0f0f0; }
.coords label { display: flex; align-items: center; gap: 1px; height: 11px; }
.coords input { flex: 1; min-width: 0; height: 11px; padding: 0 1px; border: 1px solid #999; background: #fff; white-space: pre; }

.status { flex: none; display: grid; grid-template-columns: 495px 1fr; height: 11px; padding-left: 2px; align-items: center; background: #fafafa; border-top: 1px solid #ccc; color: #111; font: 700 6px/8px "Liberation Sans", sans-serif; }

/* Taskbar */
.taskbar { flex: none; display: flex; height: 22px; background: #182c3e; color: #e6e6e6; }
.taskbar button { width: 26px; border-bottom: 2px solid transparent; }
.taskbar .open { border-color: #6cb1e8; }
.taskbar .front { background: #45535f; }
.taskbar button svg { width: 13px; height: 13px; }
.nx-tile { width: 13px; padding: 2px 0; background: #a51522; color: #fff; font-weight: 700; }
.tray { display: flex; align-items: center; gap: 5px; margin-left: auto; padding-right: 12px; }
.tray svg { width: 34px; height: 12px; }
.tray .note { width: 10px; height: 10px; margin-left: 4px; }
.clock { text-align: center; line-height: 9px; }

/* Add Component dialog */
.dialog { position: absolute; left: 320px; top: 91px; width: 171px; background: #f0f0f0; border: 1px solid #ddd; border-top: 0; }
.dlg-title { display: flex; align-items: center; gap: 4px; height: 12px; padding: 0 4px 0 3px; background: #005f87; color: #d8ebf2; font-size: 7px; }
.dlg-title svg { width: 8px; height: 8px; }
.dlg-title .dlg-btns { width: 30px; margin-left: auto; }
.dlg-body { display: flex; height: 387px; padding: 1px 3px 0 4px; }
.dlg-content { flex: 1; min-width: 0; overflow: hidden; background: #fff; }
.dlg-content section { padding: 0 6px 3px 3px; border-bottom: 1px solid #ddd; }
.dlg-content .last { border: 0; }
h3 { display: flex; align-items: center; height: 16px; font-size: 7px; color: #1d6680; }
h4 { display: flex; align-items: center; height: 12px; color: #1d6680; }
.row { display: flex; align-items: center; gap: 2px; white-space: nowrap; }
.r12 { height: 12px; }
.r14 { height: 14px; }
.r16 { height: 16px; }
.r18 { height: 18px; }
.r20 { height: 20px; }
.end { margin-left: auto; }
.ok { width: 8px; height: 8px; color: #3cae3c; }
.sq { width: 16px; height: 16px; border: 1px solid #aaa; background-color: #fff; }
.sq svg { width: 13px; height: 13px; }
.sq.small { width: 13px; height: 13px; }
.sq.small svg { width: 10px; height: 10px; }
.sq.gold { background-color: #ffe072; border-color: #ffe072; }
.btns { display: flex; align-items: center; gap: 2px; }
.group { padding: 0 1px 4px 4px; margin-bottom: 2px; background: #f0f0f0; }
.group h4 { margin-left: -4px; }
.group h4 i { padding-left: 4px; width: 11px; }
.group .row { padding-right: 3px; }
.find { flex: 1; min-width: 0; height: 12px; border: 1px solid #999; background: #fff; }
select { width: 75px; height: 12px; padding: 0 8px 0 1px; border: 1px solid #999; border-radius: 0; appearance: none; background: #fff url("data:image/svg+xml,%3Csvg xmlns='http://www.w3.org/2000/svg' width='4' height='3'%3E%3Cpath d='M0 0h4L2 3z' fill='%23222'/%3E%3C/svg%3E") no-repeat right 3px center; }
.pick { display: flex; align-items: center; margin-left: auto; width: 75px; border: 1px solid #999; background: #fff; padding-left: 2px; }
.pick svg { width: 8px; height: 8px; }
.pick select { flex: 1; border: 0; height: 11px; padding-left: 3px; }
.list { height: 90px; margin-top: 1px; padding: 0 2px 0 1px; background: #f6f6f6; border: 1px solid #e2e2e2; }
.list-head { height: 10px; line-height: 10px; padding-left: 4px; }
.list-mid { display: flex; height: 70px; }
.list-clip { flex: 1; min-width: 0; height: 70px; overflow: hidden; background: #fff; }
.list ul { display: grid; grid-auto-rows: 1fr; height: 75px; }
.list li { display: flex; align-items: center; gap: 1px; white-space: nowrap; }
.list li svg { width: 9px; height: 9px; }
.list li span { flex: 1; }
.list .sel span { background: #cde8ea; }
.vscroll.short { width: 7px; }
.vscroll.short b { height: 17px; }
.hscroll.short b { flex-basis: 98px; }
.hscroll.short svg:last-child { margin-right: 8px; }
.row label { display: flex; align-items: center; gap: 2px; margin-right: 2px; }
.row input[type="checkbox"], .row input[type="radio"] { width: 8px; height: 8px; appearance: none; border: 1px solid #555; background: #fff; }
.row input[type="radio"] { border-radius: 50%; }
.row input[type="radio"]:checked { background: #333; box-shadow: inset 0 0 0 1px #fff; }
.spin { display: flex; align-items: center; width: 43px; height: 12px; padding-left: 2px; border: 1px solid #999; background: #fff; }
.spin input { width: 30px; height: 10px; border: 0; padding: 0 2px; text-align: right; background: #0078d7; color: #fff; }
.spin svg { width: 6px; height: 10px; margin-left: 2px; }
.hot { flex: 1; height: 16px; line-height: 16px; background: #ffe072; }
.bar { height: 10px; margin-bottom: 1px; border: 1px solid #ddd; background: #f0f0f0; }
h3 + .bar { margin-top: 2px; }
.vscroll.tall { width: 8px; }
.vscroll.tall svg { height: 10px; padding: 3px 0; }
.vscroll.tall b { height: 321px; background: #aaa; }
.dlg-foot { border-top: 1px solid #e0e0e0; }
.collapse { height: 8px; line-height: 6px; font-size: 5px; text-align: center; color: #111; }
.actions { display: flex; justify-content: flex-end; gap: 3px; padding: 3px 7px 5px; }
.actions button { width: 35px; height: 12px; border: 1px solid #1d6f90; background: #fff; color: #1d6680; }
.actions .primary { background: #005f87; color: #fff; }
.marker { position: absolute; left: 2px; top: 147px; width: 161px; height: 90px; border: 3px solid #000; pointer-events: none; }
```
